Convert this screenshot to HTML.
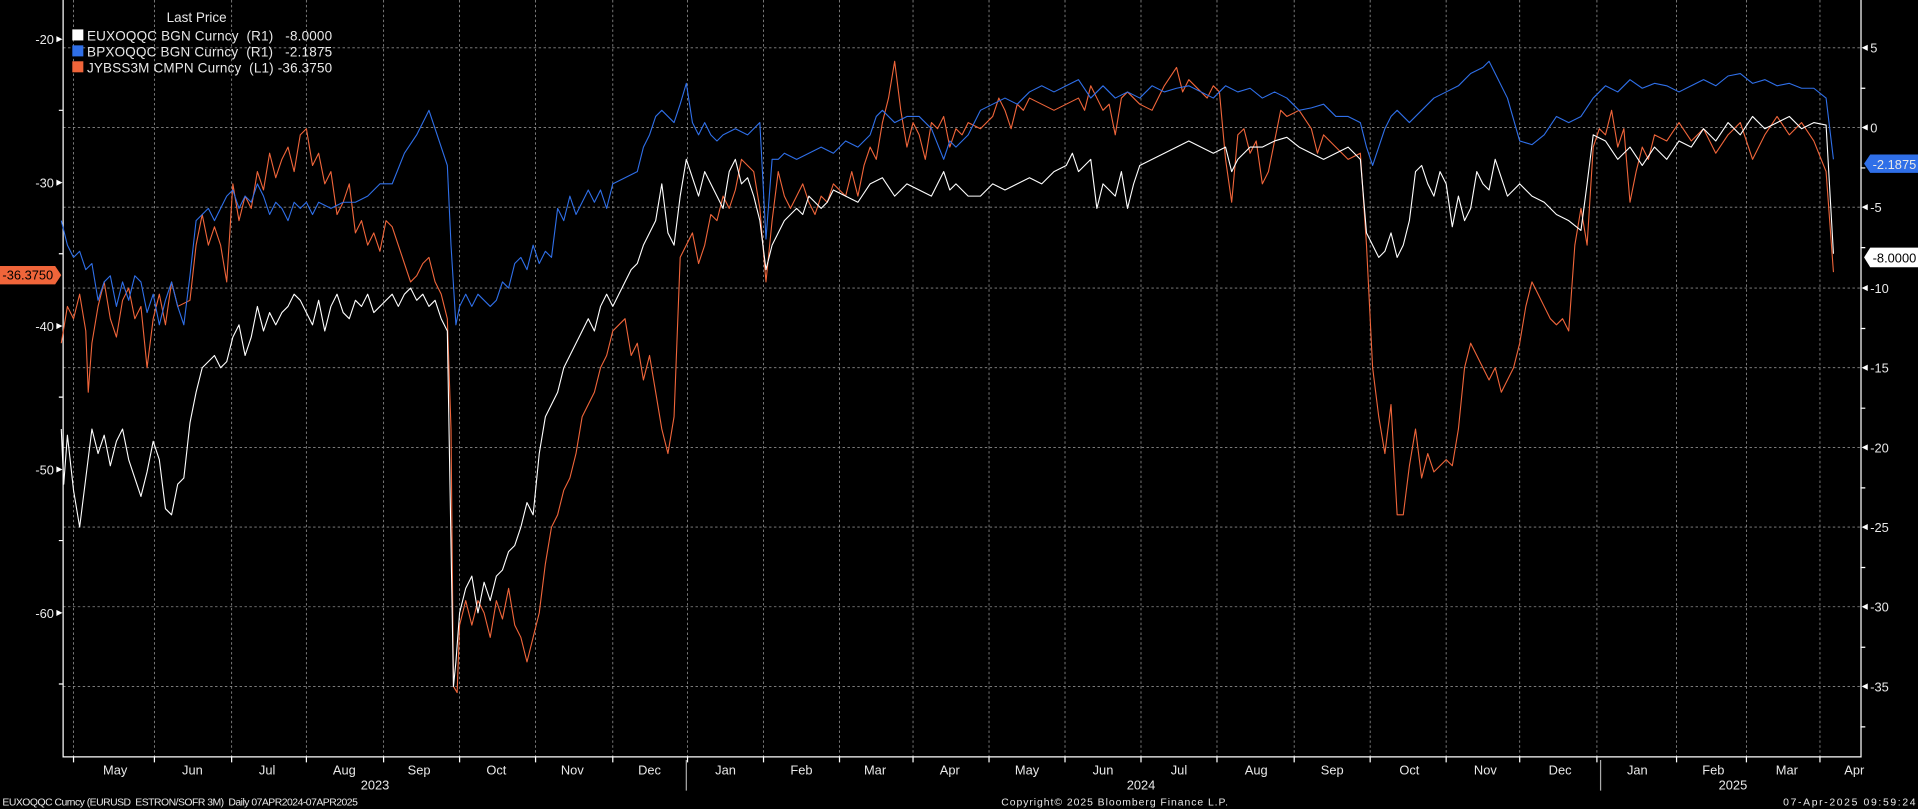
<!DOCTYPE html>
<html><head><meta charset="utf-8"><style>
html,body{margin:0;padding:0;background:#000;overflow:hidden}
svg{display:block}
text{font-family:"Liberation Sans",sans-serif;fill:#e8e8e8}
</style></head><body>
<svg width="1918" height="809" viewBox="0 0 1565 660" preserveAspectRatio="none" xmlns="http://www.w3.org/2000/svg">
<rect width="1565" height="660" fill="#000"/>
<g stroke="#8a8a8a" stroke-width="0.7" stroke-dasharray="2,2" fill="none">
<path d="M51.5 39H1518.5M51.5 104H1518.5M51.5 169H1518.5M51.5 235H1518.5M51.5 300H1518.5M51.5 365H1518.5M51.5 430H1518.5M51.5 495H1518.5M51.5 560H1518.5"/>
<path d="M60 0V617M126 0V617M189 0V617M250 0V617M313 0V617M375 0V617M437 0V617M500 0V617M561 0V617M623 0V617M685 0V617M745 0V617M807 0V617M869 0V617M931 0V617M993 0V617M1056 0V617M1118 0V617M1180 0V617M1240 0V617M1303 0V617M1368 0V617M1425 0V617M1485 0V617"/>
</g>
<g stroke="#fff" stroke-width="1" fill="none">
<path d="M51.5 0V617.5H1518.5V0"/>
<path d="M60 617V622M126 617V622M189 617V622M250 617V622M313 617V622M375 617V622M437 617V622M500 617V622M561 617V622M623 617V622M685 617V622M745 617V622M807 617V622M869 617V622M931 617V622M993 617V622M1056 617V622M1118 617V622M1180 617V622M1240 617V622M1303 617V622M1368 617V622M1425 617V622M1485 617V622"/>
<path d="M560 620V645M1306 620V645" stroke="#aaa"/>
<path d="M48 90H51M48 207H51M48 324H51M48 441H51M48 558H51M1518 72H1522M1518 137H1522M1518 202H1522M1518 268H1522M1518 333H1522M1518 398H1522M1518 463H1522M1518 528H1522M1518 593H1522"/>
</g>
<g fill="#fff">
<path d="M51 32l-5 -2.5v5zM51 149l-5 -2.5v5zM51 266l-5 -2.5v5zM51 383l-5 -2.5v5zM51 500l-5 -2.5v5z"/>
<path d="M1519 39l5 -2.5v5zM1519 104l5 -2.5v5zM1519 169l5 -2.5v5zM1519 235l5 -2.5v5zM1519 300l5 -2.5v5zM1519 365l5 -2.5v5zM1519 430l5 -2.5v5zM1519 495l5 -2.5v5zM1519 560l5 -2.5v5z"/>
</g>
<g font-size="10.5" text-anchor="end">
<text x="44" y="36">-20</text><text x="44" y="153">-30</text><text x="44" y="270">-40</text><text x="44" y="387">-50</text><text x="44" y="504">-60</text>
</g>
<g font-size="10.5">
<text x="1526" y="43">5</text><text x="1526" y="108">0</text><text x="1526" y="173">-5</text><text x="1526" y="239">-10</text><text x="1526" y="304">-15</text><text x="1526" y="369">-20</text><text x="1526" y="434">-25</text><text x="1526" y="499">-30</text><text x="1526" y="564">-35</text>
</g>
<g font-size="10.5" text-anchor="middle">
<text x="94" y="632">May</text><text x="157" y="632">Jun</text><text x="218" y="632">Jul</text><text x="281" y="632">Aug</text><text x="342" y="632">Sep</text><text x="405" y="632">Oct</text><text x="467" y="632">Nov</text><text x="530" y="632">Dec</text><text x="592" y="632">Jan</text><text x="654" y="632">Feb</text><text x="714" y="632">Mar</text><text x="775" y="632">Apr</text><text x="838" y="632">May</text><text x="900" y="632">Jun</text><text x="962" y="632">Jul</text><text x="1025" y="632">Aug</text><text x="1087" y="632">Sep</text><text x="1150" y="632">Oct</text><text x="1212" y="632">Nov</text><text x="1273" y="632">Dec</text><text x="1336" y="632">Jan</text><text x="1398" y="632">Feb</text><text x="1458" y="632">Mar</text><text x="1513" y="632">Apr</text>
<text x="306" y="644">2023</text><text x="931" y="644">2024</text><text x="1414" y="644">2025</text>
</g>
<g font-size="8.5">
<text x="2" y="657" textLength="290" xml:space="preserve">EUXOQQC Curncy (EURUSD  ESTRON/SOFR 3M)  Daily 07APR2024-07APR2025</text>
<text x="817" y="657" textLength="185">Copyright© 2025 Bloomberg Finance L.P.</text>
<text x="1455" y="657" textLength="108">07-Apr-2025 09:59:24</text>
</g>
<g fill="none" stroke-width="0.9" stroke-linejoin="round">
<polyline stroke="#f0653a" points="50,280 55,250 60,260 65,240 70,270 72,320 75,280 80,250 85,230 90,260 95,275 100,245 105,235 110,260 115,250 120,300 125,260 130,240 135,265 140,230 145,250 155,245 160,200 165,175 170,200 175,185 180,200 185,230 190,150 195,180 200,160 205,170 210,140 215,155 220,125 225,145 230,130 235,120 240,140 245,110 250,105 255,135 260,125 265,150 270,140 275,175 280,165 285,150 290,190 295,180 300,200 305,190 310,205 315,180 320,185 325,200 330,215 335,230 340,225 345,215 350,210 355,230 360,240 365,260 368,350 370,560 373,565 375,510 380,490 385,510 390,490 395,500 400,520 405,490 410,505 415,480 420,510 425,520 430,540 435,520 440,500 445,460 450,430 455,420 460,400 465,390 470,370 475,340 480,330 485,320 490,300 495,290 500,270 505,265 510,260 515,290 520,280 525,310 530,290 535,320 540,350 545,370 550,340 555,210 560,200 565,190 570,215 575,200 580,175 585,180 590,160 595,170 600,155 605,130 610,135 615,140 620,170 625,230 630,180 635,140 640,160 645,170 650,160 655,150 660,165 665,175 670,160 675,165 680,150 690,160 695,140 700,160 705,135 710,120 715,130 720,100 725,80 730,50 735,90 740,120 745,100 750,110 755,130 760,100 765,105 770,95 775,120 780,105 785,110 790,100 800,105 810,95 815,80 820,90 825,105 830,85 835,90 840,80 850,85 860,90 870,85 880,80 885,90 890,70 895,80 900,90 905,85 910,110 915,80 920,75 930,85 940,90 950,70 960,55 965,75 970,65 980,75 985,80 990,70 995,75 1000,130 1005,165 1010,110 1015,105 1020,125 1025,115 1030,150 1035,140 1040,115 1045,90 1050,95 1060,90 1070,105 1075,125 1080,110 1090,120 1100,130 1110,125 1115,200 1120,300 1125,340 1130,370 1135,330 1140,420 1145,420 1150,380 1155,350 1160,390 1165,370 1170,385 1175,380 1180,375 1185,380 1190,350 1195,300 1200,280 1205,290 1210,300 1215,310 1220,300 1225,320 1230,310 1235,300 1240,280 1245,250 1250,230 1255,240 1260,250 1265,260 1270,265 1275,260 1280,270 1285,200 1290,170 1295,200 1300,120 1305,105 1310,110 1315,90 1320,120 1325,105 1330,165 1335,140 1340,120 1345,130 1350,110 1360,115 1370,100 1380,115 1390,105 1400,125 1410,110 1420,100 1430,130 1440,110 1450,95 1460,110 1470,100 1480,115 1490,140 1496,222"/>
<polyline stroke="#2f6fe8" points="50,180 55,200 60,210 65,205 70,220 75,215 80,245 85,230 90,225 95,250 100,230 105,245 110,225 115,230 120,255 125,240 130,265 135,245 140,230 145,250 150,265 155,225 160,180 165,175 170,170 175,180 180,170 185,160 190,155 195,170 200,160 205,165 210,150 215,160 220,175 225,165 230,170 235,180 240,165 245,170 250,165 255,175 260,165 270,170 280,165 290,165 300,160 310,150 320,150 330,125 340,110 345,100 350,90 355,105 360,120 365,135 368,200 372,265 375,250 380,240 385,250 390,240 395,245 400,250 405,245 410,230 415,235 420,215 425,210 430,220 435,200 440,215 445,205 450,210 455,170 460,180 465,160 470,175 475,165 480,155 485,165 490,155 495,170 500,150 510,145 520,140 525,120 530,110 535,95 540,90 545,95 550,100 555,85 560,68 565,100 570,110 575,100 580,110 585,115 590,110 600,105 610,110 620,100 625,195 630,130 635,130 640,125 650,130 660,125 670,120 680,125 690,115 700,120 710,110 715,95 720,90 730,100 740,95 750,95 760,105 770,130 775,115 780,120 790,110 800,90 810,85 820,80 830,85 840,75 850,70 860,75 870,70 880,65 890,80 900,70 910,80 920,75 930,80 940,70 950,75 960,72 970,70 980,75 990,80 1000,70 1010,75 1020,72 1030,80 1040,75 1050,80 1060,90 1070,88 1080,85 1090,95 1100,95 1110,100 1115,120 1120,135 1125,120 1130,105 1135,95 1140,90 1150,100 1160,90 1170,80 1180,75 1190,70 1200,60 1210,55 1215,50 1220,60 1230,80 1240,115 1250,118 1260,110 1270,95 1280,100 1290,95 1300,80 1310,70 1320,75 1330,65 1340,72 1350,68 1360,70 1370,75 1380,70 1390,65 1400,70 1410,62 1420,60 1430,68 1440,65 1450,70 1460,68 1470,72 1480,72 1490,80 1496,130"/>
<polyline stroke="#fff" points="50,350 52,395 55,355 60,400 65,430 70,390 75,350 80,370 85,355 90,380 95,360 100,350 105,375 110,390 115,405 120,385 125,360 130,375 135,415 140,420 145,395 150,390 155,345 160,320 165,300 170,295 175,290 180,300 185,295 190,275 195,265 200,290 205,275 210,250 215,270 220,255 225,265 230,255 235,250 240,240 245,245 250,255 255,265 260,245 265,270 270,250 275,240 280,255 285,260 290,245 295,250 300,240 305,255 310,250 315,245 320,240 325,250 330,240 335,235 340,245 345,240 350,250 355,245 360,260 365,270 370,560 372,540 375,500 380,480 385,470 390,500 395,475 400,490 405,470 410,465 415,450 420,445 425,430 430,410 435,420 440,370 445,340 450,330 455,320 460,300 465,290 470,280 475,270 480,260 485,270 490,250 495,240 500,250 505,240 510,230 515,220 520,215 525,200 530,190 535,180 540,150 545,190 550,200 555,160 560,130 565,145 570,160 575,140 580,150 585,160 590,170 595,140 600,130 605,150 610,145 615,160 620,180 625,220 630,200 635,190 640,180 645,175 650,170 655,175 660,160 665,165 670,170 675,165 680,155 690,160 700,165 710,150 720,145 730,160 740,150 750,155 760,160 770,140 775,155 780,150 790,160 800,160 810,150 820,155 830,150 840,145 850,150 860,140 870,135 875,125 880,140 890,130 895,170 900,150 910,160 915,140 920,170 925,150 930,135 940,130 950,125 960,120 970,115 980,120 990,125 1000,120 1005,140 1010,130 1020,120 1030,120 1040,115 1050,112 1060,120 1070,125 1080,130 1090,125 1100,120 1110,130 1115,190 1120,200 1125,210 1130,205 1135,190 1140,210 1145,200 1150,180 1155,140 1160,135 1165,150 1170,160 1175,140 1180,150 1185,185 1190,160 1195,180 1200,170 1205,140 1210,150 1215,155 1220,130 1225,145 1230,160 1240,150 1250,160 1260,165 1270,175 1280,180 1290,188 1295,150 1300,110 1310,115 1320,130 1330,120 1340,135 1350,120 1360,130 1370,115 1380,120 1390,105 1400,115 1410,100 1420,110 1430,95 1440,105 1450,100 1460,95 1470,105 1480,100 1490,102 1496,207"/>
</g>
<g font-size="11">
<text x="136" y="18">Last Price</text>
<rect x="59" y="24" width="9" height="9" fill="#fff"/>
<rect x="59" y="37" width="9" height="9" fill="#2f6fe8"/>
<rect x="59" y="50" width="9" height="9" fill="#f0653a"/>
<text x="71" y="33" textLength="200" xml:space="preserve">EUXOQQC BGN Curncy  (R1)   -8.0000</text>
<text x="71" y="46" textLength="200" xml:space="preserve">BPXOQQC BGN Curncy  (R1)   -2.1875</text>
<text x="71" y="59" textLength="200" xml:space="preserve">JYBSS3M CMPN Curncy  (L1) -36.3750</text>
</g>
<path d="M1521 133.5l5 -7.5h39v15h-39z" fill="#2f6fe8"/>
<text x="1528" y="138" font-size="10.5" fill="#fff">-2.1875</text>
<path d="M1521 210l5 -8h39v16h-39z" fill="#fff"/>
<text x="1528" y="214" font-size="10.5" style="fill:#000">-8.0000</text>
<path d="M0 217h45l5 7.5l-5 7.5h-45z" fill="#f0653a"/>
<text x="2" y="228" font-size="10.5" style="fill:#000">-36.3750</text>
</svg>
</body></html>
